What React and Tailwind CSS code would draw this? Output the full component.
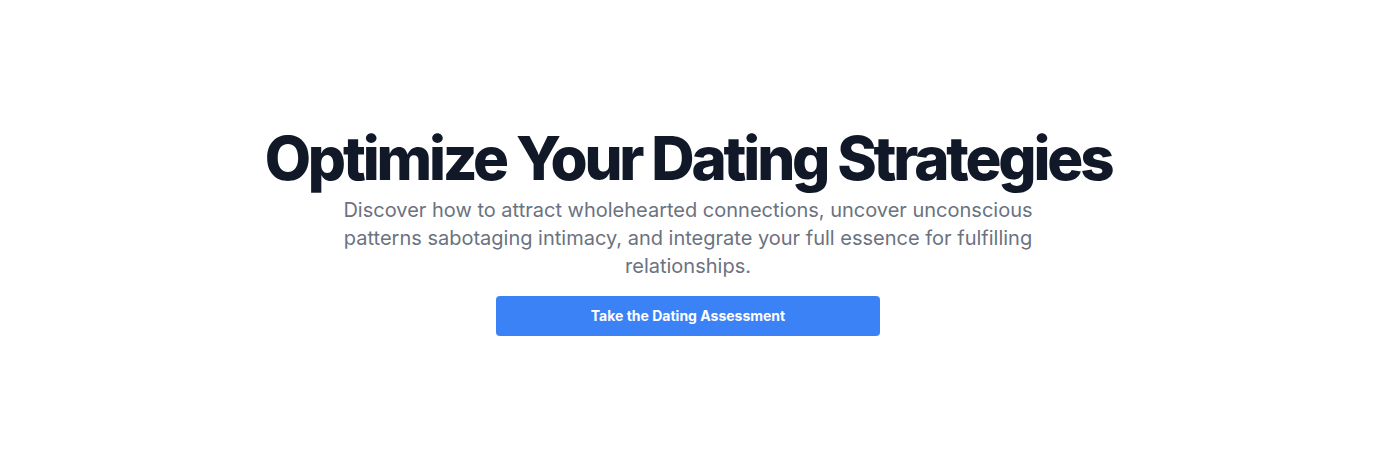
export default function App() {
  return (
    <section className="w-full h-[464px] bg-white flex items-center justify-center font-['Inter',sans-serif]">
      <div className="flex flex-col items-center text-center">
        <h1 className="text-6xl font-extrabold tracking-[-0.053em] text-[#111827]">
          Optimize Your Dating Strategies
        </h1>
        <p className="mt-2 max-w-[700px] text-xl text-[#6b7280]">
          Discover how to attract wholehearted connections, uncover unconscious patterns sabotaging intimacy, and
          integrate your full essence for fulfilling relationships.
        </p>
        <button className="mt-4 w-[384px] h-10 rounded bg-[#3b82f6] text-white text-sm font-bold">
          Take the Dating Assessment
        </button>
      </div>
    </section>
  );
}
